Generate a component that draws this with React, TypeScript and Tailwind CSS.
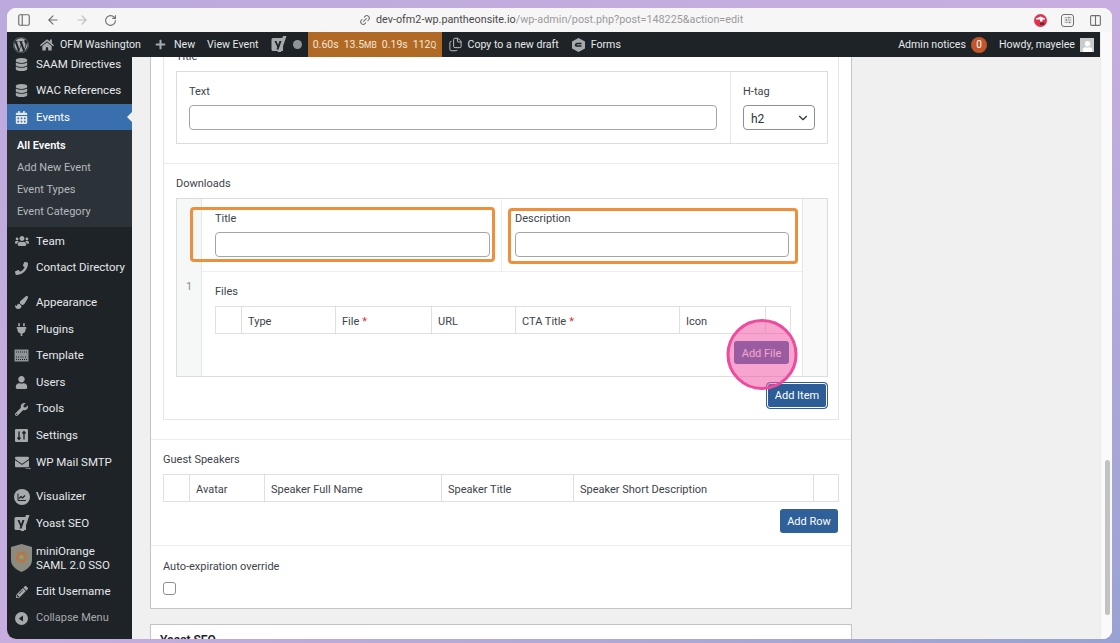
import type { ReactNode } from "react";
import {
  ArrowLeft,
  ArrowRight,
  ChevronDown,
  ChevronUp,
  Columns2,
  Files,
  Link2,
  PanelLeft,
  RotateCw,
  SlidersHorizontal,
  X,
} from "lucide-react";
import {
  FaCalendarAlt,
  FaDatabase,
  FaEnvelope,
  FaHome,
  FaPaintBrush,
  FaPencilAlt,
  FaPhoneAlt,
  FaPlug,
  FaPlus,
  FaUser,
  FaUsers,
  FaWordpress,
  FaWrench,
} from "react-icons/fa";

function YoastIcon() {
  return (
    <svg width="16" height="17" viewBox="0 0 16 17">
      <path d="M2 2h10v13H2a1.500 1.500 0 0 1-1.500-1.500v-10A1.500 1.500 0 0 1 2 2z" fill="#a7aaad" />
      <path d="M12 0h3.500L10 16H6.500z" fill="#a7aaad" />
      <path d="M3.500 5h2l1.500 4 1.500-4h2l-3 8.500H5.500l.8-2.300z" fill="#1d2327" />
    </svg>
  );
}

function TemplateIcon() {
  return (
    <svg width="15" height="13" viewBox="0 0 15 13" fill="none">
      <rect x="0.5" y="0.5" width="14" height="12" fill="#8f9499" />
      <path d="M2 3h11M2 8h3M6.500 8h3M11 8h2M2 10.500h11" stroke="#1d2327" strokeWidth="1" strokeDasharray="1 1" />
    </svg>
  );
}

function SettingsIcon() {
  return (
    <svg width="13" height="13" viewBox="0 0 13 13">
      <rect width="13" height="13" rx="1" fill="#a7aaad" />
      <path d="M4 2.500v8M2.500 8.500 4 10.500l1.500-2M9 10.500v-8M7.500 4.500 9 2.500l1.500 2" stroke="#1d2327" strokeWidth="1.300" fill="none" />
    </svg>
  );
}

function MailIcon() {
  return (
    <span className="relative flex">
      <FaEnvelope size={14} />
      <span className="absolute -bottom-[3px] -right-[4px] text-[9px] font-bold leading-[9px] text-[#a7aaad]">→</span>
    </span>
  );
}

function VisualizerIcon() {
  return (
    <svg width="16" height="16" viewBox="0 0 16 16">
      <circle cx="8" cy="8" r="8" fill="#a7aaad" />
      <path d="M4 4.500v7h8" stroke="#1d2327" strokeWidth="1" fill="none" />
      <path d="M5 9.500l2-2 1.500 1.500L11 6.500" stroke="#1d2327" strokeWidth="1.200" fill="none" />
    </svg>
  );
}

function ShieldIcon() {
  return (
    <svg width="21" height="28" viewBox="0 0 21 28">
      <path d="M10.500 0 21 3v13c0 6-5 9.500-10.500 12C5 25.500 0 22 0 16V3z" fill="#8d8b80" />
      <circle cx="10.500" cy="13" r="4.500" fill="none" stroke="#c8702f" strokeWidth="1.800" />
      <circle cx="10.500" cy="13" r="1.300" fill="#c8a02f" />
    </svg>
  );
}

function CollapseIcon() {
  return (
    <svg width="13" height="13" viewBox="0 0 13 13">
      <circle cx="6.500" cy="6.500" r="6.500" fill="#a7aaad" />
      <path d="M8 3.500v6L3.800 6.500z" fill="#1d2327" />
    </svg>
  );
}

function FormsIcon() {
  return (
    <svg width="13" height="14" viewBox="0 0 13 14">
      <path d="M6.500 0 13 3.500v7L6.500 14 0 10.500v-7z" fill="#a7aaad" />
      <path d="M3.500 8h6M9.500 5.500h-4C4.500 5.500 3.500 6.500 3.500 8" stroke="#1d2327" strokeWidth="1.400" fill="none" />
    </svg>
  );
}

function ExtensionIcon() {
  return (
    <svg width="13" height="13" viewBox="0 0 13 13">
      <circle cx="6.500" cy="6.500" r="6.500" fill="#e2304e" />
      <path d="M2 4.500 6.500 2.500 11 4.500v1H8.500v2H6v-2H2z" fill="#ffffff" />
      <rect x="6" y="8.500" width="4.500" height="2.500" rx="0.500" fill="#5b3038" />
    </svg>
  );
}

function SideRow({ icon, label, spaced }: { icon: ReactNode; label: string; spaced?: boolean }) {
  return (
    <div className={`flex h-[26.6px] items-center text-[#e6e8ea] ${spaced ? "mt-[8px]" : ""}`}>
      <span className="flex w-[29px] shrink-0 justify-center text-[#a7aaad]">{icon}</span>
      <span className="whitespace-nowrap">{label}</span>
    </div>
  );
}

function Sidebar() {
  return (
    <aside className="w-[125px] shrink-0 overflow-hidden bg-[#1d2327] text-[11.500px]">
      <div className="-mt-[6px]">
        <SideRow icon={<FaDatabase size={13} />} label="SAAM Directives" />
        <SideRow icon={<FaDatabase size={13} />} label="WAC References" />
        <div className="relative flex h-[26px] items-center bg-[#3a6fae] text-white">
          <span className="flex w-[29px] shrink-0 justify-center text-[#e6e8ea]">
            <FaCalendarAlt size={13} />
          </span>
          Events
          <span className="absolute right-0 top-[8px] h-0 w-0 border-y-[5px] border-r-[5px] border-y-transparent border-r-[#f0f0f1]" />
        </div>
        <ul className="bg-[#2c3338] pb-[4px] pl-[10px] pt-[5px] text-[11px] leading-[22px] text-[#b4b9be]">
          <li className="font-semibold text-white">All Events</li>
          <li>Add New Event</li>
          <li>Event Types</li>
          <li>Event Category</li>
        </ul>
        <div className="mt-[1px]">
          <SideRow icon={<FaUsers size={14} />} label="Team" />
          <SideRow icon={<FaPhoneAlt size={13} className="scale-x-[-1]" />} label="Contact Directory" />
        </div>
        <SideRow spaced icon={<FaPaintBrush size={13} />} label="Appearance" />
        <SideRow icon={<FaPlug size={13} />} label="Plugins" />
        <SideRow icon={<TemplateIcon />} label="Template" />
        <SideRow icon={<FaUser size={13} />} label="Users" />
        <SideRow icon={<FaWrench size={13} />} label="Tools" />
        <SideRow icon={<SettingsIcon />} label="Settings" />
        <SideRow icon={<MailIcon />} label="WP Mail SMTP" />
        <SideRow spaced icon={<VisualizerIcon />} label="Visualizer" />
        <SideRow icon={<YoastIcon />} label="Yoast SEO" />
        <div className="flex h-[42px] items-center leading-[14px] text-[#e6e8ea]">
          <span className="flex w-[29px] shrink-0 justify-center">
            <ShieldIcon />
          </span>
          <span>
            miniOrange
            <br />
            SAML 2.0 SSO
          </span>
        </div>
        <SideRow icon={<FaPencilAlt size={12} />} label="Edit Username" />
        <div className="flex h-[26px] items-center text-[11px] text-[#a7aaad]">
          <span className="flex w-[29px] shrink-0 justify-center">
            <CollapseIcon />
          </span>
          Collapse Menu
        </div>
      </div>
    </aside>
  );
}

function AdminBar() {
  return (
    <header className="flex h-[25px] shrink-0 items-center bg-[#1d2327] text-[10.600px] leading-[27px] text-[#e6e8ea]">
      <FaWordpress size={16} className="ml-[6px] text-[#a7aaad]" />
      <FaHome size={14} className="ml-[11px] text-[#a7aaad]" />
      <span className="ml-[6px]">OFM Washington</span>
      <FaPlus size={11} className="ml-[14px] text-[#a7aaad]" />
      <span className="ml-[8px]">New</span>
      <span className="ml-[12px]">View Event</span>
      <span className="ml-[12px] flex">
        <YoastIcon />
      </span>
      <span className="ml-[6px] h-[9px] w-[9px] rounded-full bg-[#8f9499]" />
      <div className="ml-[6px] flex h-full w-[134px] items-center justify-center gap-[5px] bg-[#b16a25] text-[10.500px] text-[#f3e7d8]">
        <span>0.60s</span>
        <span>
          13.5<span className="text-[8.500px]">MB</span>
        </span>
        <span>0.19s</span>
        <span>
          112<span className="text-[8.500px]">Q</span>
        </span>
      </div>
      <Files size={15} strokeWidth={1.500} className="ml-[6px] text-[#c3c4c7]" />
      <span className="ml-[5px] whitespace-nowrap">Copy to a new draft</span>
      <span className="ml-[13px] flex">
        <FormsIcon />
      </span>
      <span className="ml-[6px]">Forms</span>
      <div className="ml-auto flex items-center">
        <span>Admin notices</span>
        <span className="ml-[5px] flex h-[16px] w-[16px] items-center justify-center rounded-full bg-[#c2562a] text-[10px] leading-[16px] text-white">0</span>
        <span className="ml-[12px]">Howdy, mayelee</span>
        <span className="ml-[5px] mr-[6px] flex h-[14px] w-[14px] items-end justify-center overflow-hidden bg-[#c9cbcd]">
          <FaUser size={11} className="text-white" />
        </span>
      </div>
    </header>
  );
}

function Label({ children }: { children: ReactNode }) {
  return <div className="h-[14px] text-[11px] leading-[16px] text-[#3c434a]">{children}</div>;
}

function TextBox({ className }: { className: string }) {
  return <div className={`h-[25px] rounded-[4px] border border-[#a3a6a9] bg-white ${className}`} />;
}

function Required() {
  return <span className="ml-[3px] text-[#d63638]">*</span>;
}

function HeadRow({ cols }: { cols: { w: string; label?: ReactNode }[] }) {
  return (
    <div className="flex h-[28px] border border-[#e0e0e0] text-[11px] text-[#3c434a]">
      {cols.map((c, i) => (
        <div key={i} className={`flex items-center border-r border-[#e0e0e0] pl-[6px] pt-[4px] last:border-r-0 ${c.w}`}>
          {c.label}
        </div>
      ))}
    </div>
  );
}

function FormPanel() {
  return (
    <section className="-mt-[9px] w-[702px] border border-[#c3c4c7] bg-white">
      <div className="px-[12px] pb-[19px]">
        <div className="border-x border-b border-[#e6e6e6] pb-[10px] pl-[12px] pr-[10px]">
          <Label>Title</Label>
          <div className="mt-[8px] flex h-[73px] border border-[#dcdcde]">
            <div className="w-[553px] px-[12px] pt-[12px]">
              <Label>Text</Label>
              <TextBox className="mt-[7px] w-[528px]" />
            </div>
            <div className="flex-1 border-l border-[#e6e6e6] pl-[12px] pt-[12px]">
              <Label>H-tag</Label>
              <div className="mt-[7px] flex h-[25px] w-[72px] items-center justify-between rounded-[4px] border border-[#8c8f94] pl-[7px] pr-[4px] text-[12px] leading-[16px] text-[#2c3338]">
                <span className="pt-[2px]">h2</span>
                <ChevronDown size={14} />
              </div>
            </div>
          </div>
          <div className="-ml-[12px] -mr-[10px] mt-[19px] border-t border-[#ececec] pl-[12px] pr-[10px] pt-[12px]">
            <Label>Downloads</Label>
            <div className="mt-[8px] flex h-[179px] border border-[#dcdcde]">
              <div className="flex w-[25px] items-center justify-center border-r border-[#e6e6e6] bg-[#f6f7f7] text-[11px] text-[#8c8f94]">1</div>
              <div className="flex w-[600px] flex-col">
                <div className="flex h-[73px] border-b border-[#eeeeee]">
                  <div className="relative w-[300px] border-r border-[#eeeeee] pl-[13px] pt-[12px]">
                    <Label>Title</Label>
                    <TextBox className="mt-[7px] w-[275px]" />
                    <div className="absolute -left-[12px] right-[6px] top-[8px] h-[55px] rounded-[4px] border-[3px] border-[#ee8f3c]" />
                  </div>
                  <div className="relative flex-1 pl-[13px] pt-[12px]">
                    <Label>Description</Label>
                    <TextBox className="mt-[7px] w-[274px]" />
                    <div className="absolute left-[6px] right-[4px] top-[9px] h-[56px] rounded-[4px] border-[3px] border-[#ee8f3c]" />
                  </div>
                </div>
                <div className="flex-1 pl-[13px] pt-[12px]">
                  <Label>Files</Label>
                  <div className="mt-[8px] w-[576px]">
                    <HeadRow
                      cols={[
                        { w: "w-[26px]" },
                        { w: "w-[94px]", label: "Type" },
                        { w: "w-[96px]", label: <>File<Required /></> },
                        { w: "w-[84px]", label: "URL" },
                        { w: "w-[164px]", label: <>CTA Title<Required /></> },
                        { w: "w-[86px]", label: "Icon" },
                        { w: "flex-1" },
                      ]}
                    />
                    <div className="mr-[2px] mt-[7px] flex justify-end">
                      <button className="relative h-[23px] w-[55px] rounded-[3px] bg-[#2f6099] pt-[3px] text-[11px] text-white">
                        Add File
                        <span className="absolute left-1/2 top-1/2 z-10 h-[71px] w-[71px] -translate-x-1/2 -translate-y-[34px] rounded-full border-[3px] border-[#ee4a9e] bg-[#f05aa5]/55" />
                      </button>
                    </div>
                  </div>
                </div>
              </div>
              <div className="flex-1 border-l border-[#e6e6e6] bg-[#f9f9f9]" />
            </div>
            <div className="mt-[5px] flex justify-end">
              <button className="h-[27px] w-[62px] rounded-[4px] border border-[#2f6099] bg-[#2c5d96] pt-[2px] text-[11px] text-white shadow-[inset_0_0_0_1px_#ffffff]">
                Add Item
              </button>
            </div>
          </div>
        </div>
      </div>
      <div className="border-t border-[#ececec] px-[12px] pb-[12px] pt-[12px]">
        <Label>Guest Speakers</Label>
        <div className="mt-[8px]">
          <HeadRow
            cols={[
              { w: "w-[26px]" },
              { w: "w-[75px]", label: "Avatar" },
              { w: "w-[177px]", label: "Speaker Full Name" },
              { w: "w-[132px]", label: "Speaker Title" },
              { w: "w-[240px]", label: "Speaker Short Description" },
              { w: "flex-1" },
            ]}
          />
        </div>
        <div className="mr-[1px] mt-[7px] flex justify-end">
          <button className="h-[24px] w-[58px] rounded-[3px] bg-[#2f6099] pt-[2px] text-[11px] text-white">Add Row</button>
        </div>
      </div>
      <div className="border-t border-[#ececec] px-[12px] pb-[13px] pt-[13px]">
        <Label>Auto-expiration override</Label>
        <div className="mt-[9px] h-[13px] w-[13px] rounded-[3px] border border-[#8c8f94] bg-white" />
      </div>
    </section>
  );
}

function YoastBox() {
  return (
    <section className="mt-[15px] flex h-[40px] w-[702px] border border-[#c3c4c7] bg-white pl-[9px] pt-[6px] text-[12px] font-semibold text-[#1d2327]">
      Yoast SEO
      <div className="ml-auto mr-[4px] flex h-[14px] items-start gap-[6px] pt-[5px] text-[#787c82]">
        <ChevronUp size={14} />
        <X size={14} />
        <span className="mt-[3px] h-0 w-0 border-x-[4px] border-t-[5px] border-x-transparent border-t-[#787c82]" />
      </div>
    </section>
  );
}

function BrowserBar() {
  return (
    <div className="flex h-[24px] shrink-0 items-center bg-[#f6f6f6] text-[#6e6e6e]">
      <PanelLeft size={14} className="ml-[10px]" />
      <ArrowLeft size={14} className="ml-[15px]" />
      <ArrowRight size={14} className="ml-[15px] text-[#bdbdbd]" />
      <RotateCw size={13} className="ml-[15px]" />
      <Link2 size={12} className="ml-[242px] -rotate-45" />
      <span className="ml-[5px] whitespace-nowrap text-[10.800px] text-[#9a9a9a]">
        <span className="text-[#4a4a4a]">dev-ofm2-wp.pantheonsite.io</span>/wp-admin/post.php?post=148225&amp;action=edit
      </span>
      <span className="ml-auto flex">
        <ExtensionIcon />
      </span>
      <span className="ml-[14px] flex h-[13px] w-[13px] items-center justify-center rounded-[3px] border border-[#6e6e6e]">
        <SlidersHorizontal size={8} />
      </span>
      <Columns2 size={13} className="ml-[15px] mr-[10px]" />
    </div>
  );
}

export default function App() {
  return (
    <div className="h-[643px] w-[1120px] overflow-hidden bg-gradient-to-br from-[#bcaadc] via-[#c8aee0] to-[#98a2d2] pl-[7px] pt-[8px] font-['Roboto',sans-serif]">
      <div className="flex h-[631px] w-[1105px] flex-col overflow-hidden rounded-[9px] bg-white">
        <BrowserBar />
        <div className="flex min-h-0 flex-1">
          <div className="flex w-[1093px] flex-col">
            <AdminBar />
            <div className="flex min-h-0 flex-1">
              <Sidebar />
              <main className="min-w-0 flex-1 overflow-hidden bg-[#f0f0f1] pl-[18px]">
                <FormPanel />
                <YoastBox />
              </main>
            </div>
          </div>
          <div className="flex-1 border-l border-[#ececec] bg-[#fafafa] pl-[4px] pt-[428px]">
            <div className="h-[155px] w-[5px] rounded-full bg-[#c2c2c2]" />
          </div>
        </div>
      </div>
    </div>
  );
}
